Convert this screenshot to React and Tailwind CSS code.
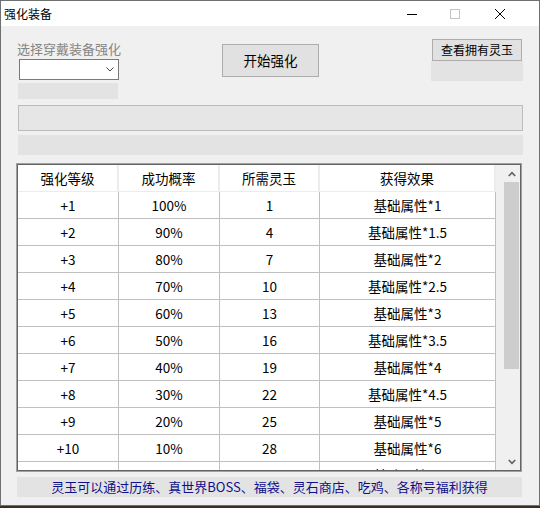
import React from 'react';

const rows = [
  ['+1', '100%', '1', '基础属性*1'],
  ['+2', '90%', '4', '基础属性*1.5'],
  ['+3', '80%', '7', '基础属性*2'],
  ['+4', '70%', '10', '基础属性*2.5'],
  ['+5', '60%', '13', '基础属性*3'],
  ['+6', '50%', '16', '基础属性*3.5'],
  ['+7', '40%', '19', '基础属性*4'],
  ['+8', '30%', '22', '基础属性*4.5'],
  ['+9', '20%', '25', '基础属性*5'],
  ['+10', '10%', '28', '基础属性*6'],
  ['+11', '5%', '31', '基础属性*7'],
];

const widths = ['w-[101px]', 'w-[101px]', 'w-[100px]', 'w-[176px]'];
const headers = ['强化等级', '成功概率', '所需灵玉', '获得效果'];

function TitleBar() {
  return (
    <div className="flex h-[25px] items-center bg-white">
      <span className="ml-[3px] text-[12px] text-black">强化装备</span>
      <div className="ml-auto flex items-center pr-[34px]">
        <svg width="10" height="10" viewBox="0 0 10 10">
          <path d="M0 5.5 H10" stroke="#000" strokeWidth="1" />
        </svg>
        <svg width="10" height="10" viewBox="0 0 10 10" className="ml-[33px]">
          <rect x="0.5" y="0.5" width="9" height="9" fill="none" stroke="#c4c4c4" strokeWidth="1" />
        </svg>
        <svg width="10" height="10" viewBox="0 0 10 10" className="ml-[35px]">
          <path d="M0 0 L10 10 M10 0 L0 10" stroke="#000" strokeWidth="1" />
        </svg>
      </div>
    </div>
  );
}

function Grid() {
  return (
    <div className="ml-[15px] mt-[8px] h-[309px] w-[506px] border border-[#a0a0a0]">
      <div className="flex h-full w-full overflow-hidden border border-[#646464] bg-[#f0f0f0]">
        <div className="h-[305px] w-[478px] overflow-hidden">
          <div className="flex h-[27px] border-b border-[#ececec] bg-white">
            {headers.map((h, i) => (
              <div key={h} className={`${widths[i]} flex items-center justify-center border-r-2 border-[#ececec]`}>
                {h}
              </div>
            ))}
          </div>
          {rows.map((r) => (
            <div key={r[0]} className="flex h-[27px] shrink-0 border-b border-[#c0c0c0] bg-white">
              {r.map((c, i) => (
                <div key={i} className={`${widths[i]} flex items-center justify-center border-r border-[#c0c0c0]`}>
                  {c}
                </div>
              ))}
            </div>
          ))}
        </div>
        <div className="w-[7px]" />
        <div className="flex w-[17px] flex-col">
          <div className="flex h-[17px] items-center justify-center">
            <svg width="8" height="6" viewBox="0 0 8 6">
              <path d="M0.8 5 L4 1.6 L7.2 5" fill="none" stroke="#606060" strokeWidth="1.6" />
            </svg>
          </div>
          <div className="ml-[1px] h-[187px] w-[15px] bg-[#cdcdcd]" />
          <div className="flex-1" />
          <div className="flex h-[17px] items-center justify-center">
            <svg width="8" height="6" viewBox="0 0 8 6">
              <path d="M0.8 1 L4 4.4 L7.2 1" fill="none" stroke="#606060" strokeWidth="1.6" />
            </svg>
          </div>
        </div>
      </div>
    </div>
  );
}

export default function App() {
  return (
    <div
      className="h-[508px] w-[540px] bg-[#3b2f22]"
      style={{ fontFamily: '"Noto Sans CJK SC", "Noto Sans", sans-serif' }}
    >
      <div className="flex h-[506px] w-[540px] flex-col border border-[#707070] bg-[#f0f0f0] text-[13.5px] text-black">
        <TitleBar />
        <div className="flex flex-col">
          <div className="mt-[13px] flex items-start">
            <div className="ml-[16px] flex w-[102px] flex-col">
              <div className="h-[20px] whitespace-nowrap text-[13px] leading-[20px] text-[#858585]">选择穿戴装备强化</div>
              <div className="ml-[2px] flex h-[21px] w-[100px] items-center justify-end border border-[#7a7a7a] bg-white pr-[4px]">
                <svg width="8" height="5" viewBox="0 0 8 5">
                  <path d="M0.5 0.5 L4 4 L7.5 0.5" fill="none" stroke="#444" strokeWidth="1" />
                </svg>
              </div>
              <div className="ml-[1px] mt-[3px] h-[16px] w-[100px] bg-[#e3e3e3]" />
            </div>
            <button className="ml-[103px] mt-[5px] flex h-[33px] w-[97px] items-center justify-center border border-[#adadad] bg-[#e1e1e1] text-[13.5px]">
              开始强化
            </button>
            <div className="ml-[112px] flex w-[92px] flex-col">
              <button className="ml-[1px] flex h-[22px] w-[90px] items-center justify-center border border-[#adadad] bg-[#e1e1e1] text-[12px]">
                查看拥有灵玉
              </button>
              <div className="h-[20px] w-[92px] bg-[#e3e3e3]" />
            </div>
          </div>
          <div className="ml-[17px] mt-[6px] h-[26px] w-[505px] border border-[#bcbcbc] bg-[#e6e6e6]" />
          <div className="ml-[17px] mt-[4px] h-[20px] w-[505px] bg-[#e3e3e3]" />
          <Grid />
          <div className="ml-[16px] mt-[5px] flex h-[20px] w-[505px] items-center justify-center whitespace-nowrap bg-[#e3e3e3] text-[13px] text-[#10108a]">
            灵玉可以通过历练、真世界BOSS、福袋、灵石商店、吃鸡、各称号福利获得
          </div>
        </div>
      </div>
    </div>
  );
}
